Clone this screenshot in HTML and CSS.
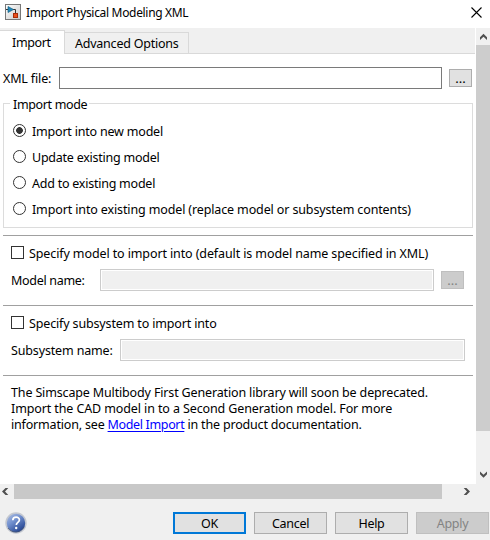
FILE: index.html
```html
<!DOCTYPE html>
<html lang="en">
<head>
<meta charset="utf-8">
<title>Import Physical Modeling XML</title>
<link rel="stylesheet" href="styles.css">
</head>
<body>
<div class="dialog">
  <header class="titlebar">
    <svg class="app-icon" width="16" height="16" viewBox="0 0 16 16">
      <defs><linearGradient id="tile" x2="1" y2="1"><stop offset="0" stop-color="#fff"/><stop offset="1" stop-color="#c9c9c9"/></linearGradient></defs>
      <rect x=".5" y=".5" width="15" height="15" fill="url(#tile)" stroke="#777"/>
      <path d="M1 5.500h2M8 5.500h2.500v4" fill="none" stroke="#333"/>
      <path d="M3 2.500v6l5.500-3z" fill="#2389bd" stroke="#176080" stroke-width=".7"/>
      <rect x="8.500" y="9.500" width="4" height="4" fill="#e8501e" stroke="#a92c08"/>
    </svg>
    <h1 class="title">Import Physical Modeling XML</h1>
    <svg class="close" width="11" height="11" viewBox="0 0 11 11"><path d="M.5.5l10 10M10.500.5l-10 10" stroke="#000" stroke-width="1.100"/></svg>
  </header>
  <div class="viewport">
    <main class="pane">
      <nav class="tabs">
        <div class="tab active"><span class="t-import">Import</span></div>
        <div class="tab"><span class="t-advanced">Advanced Options</span></div>
      </nav>
      <div class="row file-row">
        <label class="t-file">XML file:</label>
        <div class="field"></div>
        <button class="browse">...</button>
      </div>
      <fieldset class="mode">
        <legend><span class="t-mode">Import mode</span></legend>
        <label class="option"><i class="radio on"></i><span class="t-r1">Import into new model</span></label>
        <label class="option"><i class="radio"></i><span class="t-r2">Update existing model</span></label>
        <label class="option"><i class="radio"></i><span class="t-r3">Add to existing model</span></label>
        <label class="option"><i class="radio"></i><span class="t-r4">Import into existing model (replace model or subsystem contents)</span></label>
      </fieldset>
      <section class="group">
        <label class="check"><i class="box"></i><span class="t-c1">Specify model to import into (default is model name specified in XML)</span></label>
        <div class="row name-row model-row">
          <label class="label-model"><span class="t-model">Model name:</span></label>
          <div class="field off"></div>
          <button class="browse off" disabled>...</button>
        </div>
      </section>
      <section class="group">
        <label class="check"><i class="box"></i><span class="t-c2">Specify subsystem to import into</span></label>
        <div class="row name-row">
          <label class="label-sub"><span class="t-sub">Subsystem name:</span></label>
          <div class="field off"></div>
        </div>
      </section>
      <div class="note">
        <div class="t-n1">The Simscape Multibody First Generation library will soon be deprecated.</div>
        <div class="t-n2">Import the CAD model in to a Second Generation model. For more</div>
        <div class="t-n3">information, see <a class="link">Model Import</a> in the product documentation.</div>
      </div>
    </main>
    <div class="vbar">
      <svg width="14" height="17" viewBox="0 0 14 17"><path d="M4 12V9.200l3.500-3.500L11 9.200V12L7.500 8.700z" fill="#505050"/></svg>
      <div class="vthumb"></div>
      <svg class="end" width="14" height="17" viewBox="0 0 14 17"><path d="M4 4.500v2.800l3.500 3.500L11 7.300V4.500L7.500 7.800z" fill="#505050"/></svg>
    </div>
  </div>
  <div class="hbar">
    <svg width="14" height="15" viewBox="0 0 14 15"><path d="M8.300 4H5.500L2 7.500 5.500 11h2.800L5 7.500z" fill="#505050"/></svg>
    <div class="hthumb"></div>
    <svg class="right" width="14" height="15" viewBox="0 0 14 15"><path d="M1.700 4h2.800L8 7.500 4.500 11H1.700L5 7.500z" fill="#505050"/></svg>
  </div>
  <footer class="footer">
    <svg class="help-icon" width="22" height="22" viewBox="0 0 22 22">
      <defs><linearGradient id="orb" x2=".7" y2="1"><stop offset="0" stop-color="#b6c5e5"/><stop offset=".45" stop-color="#7391cf"/><stop offset="1" stop-color="#1d3d8b"/></linearGradient></defs>
      <circle cx="11" cy="11" r="10" fill="url(#orb)" stroke="#c4c8d0" stroke-width="1.500"/>
      <path d="M3 16a9.300 9.300 0 0 0 16-1" fill="none" stroke="#475574" stroke-width=".8"/>
      <path d="M7.800 8.200c.1-4.200 6.700-4.100 6.600-.2 0 2.500-3.100 2.400-3.100 5" fill="none" stroke="#fff" stroke-width="1.700"/>
      <circle cx="11.200" cy="16" r="1.200" fill="#fff"/>
    </svg>
    <button class="btn primary">OK</button>
    <button class="btn">Cancel</button>
    <button class="btn">Help</button>
    <button class="btn off" disabled>Apply</button>
  </footer>
</div>
</body>
</html>
```
FILE: styles.css
```css
* { box-sizing: border-box; }
body { margin: 0; font: 12.5px/16px "Noto Sans", sans-serif; color: #000; white-space: nowrap; }
.dialog { width: 490px; height: 540px; display: flex; flex-direction: column; background: #fff; overflow: hidden; }
.titlebar { height: 28px; display: flex; align-items: flex-start; padding: 4px 8px 0 5px; }
.title { flex: 1; margin: 1px 0 0 5px; font-size: 12px; font-weight: 400; line-height: 16px; letter-spacing: -.32px; }
.close { margin-top: 3px; }
.viewport { height: 456px; display: flex; }
.pane { width: 476px; }
.tabs { height: 26px; width: 475px; display: flex; align-items: flex-end; background: #f0f0f0; border-bottom: 1px solid #d9d9d9; }
.tab { height: 21px; width: 124px; padding: 3px 0 0 10px; border: 1px solid #d9d9d9; border-width: 1px 1px 0 0; line-height: 16px; }
.tab.active { width: 65px; height: 24px; padding: 4px 0 0 12px; background: #fff; margin-bottom: -1px; }
.row { display: flex; align-items: center; }
.row label, .option span, .check span { padding-top: 2px; }
.field { flex: 1; height: 22px; border: 1px solid #7a7a7a; background: #fff; }
.field.off { border-color: #ccc; background: #f0f0f0; box-shadow: inset 0 0 0 1px #fff; }
.browse { width: 23px; height: 18px; margin-left: 7px; padding: 0; border: 1px solid #adadad; background: #e1e1e1; font: 13px/16px "Noto Sans", sans-serif; }
.browse.off { background: #ccc; border-color: #bfbfbf; color: #838383; }
.file-row { margin: 13px 4px 0 3px; height: 22px; }
.file-row label { width: 56px; }
.mode { position: relative; margin: 14px 3px 0; height: 125px; padding: 14px 0 0 9px; border: 1px solid #dcdcdc; }
.mode legend { position: absolute; top: -7px; left: 6px; padding: 0 2px 0 3px; background: #fff; }
.option { height: 26px; display: flex; align-items: center; }
.radio { width: 13px; height: 13px; margin-right: 6px; border: 1px solid #333; border-radius: 50%; position: relative; top: -1px; }
.radio.on { background: radial-gradient(circle, #333 0 3px, #fff 3.700px); }
.group { height: 70px; margin: 0 3px; padding: 10px 8px 0; border-top: 1px solid #a0a0a0; }
.mode + .group { margin-top: 7px; }
.check { display: flex; height: 13px; align-items: center; }
.box { width: 13px; height: 13px; margin-right: 5px; border: 1px solid #333; }
.name-row { margin-top: 10px; }
.model-row { margin-right: 1px; }
.label-model { width: 89px; }
.label-sub { width: 109px; }
.note { margin: 0 3px; padding: 9px 8px 0; border-top: 1px solid #a0a0a0; }
.link { display: inline-block; height: 16px; line-height: 16px; color: #00f; text-decoration: underline 1px; text-underline-offset: 2px; letter-spacing: -.35px; vertical-align: top; }
.t-import, .t-mode { letter-spacing: -.35px; }
.t-advanced { letter-spacing: -.23px; }
.t-file, .t-c2, .t-sub, .t-n1 { letter-spacing: -.15px; }
.t-r4 { letter-spacing: -.13px; }
.t-r1 { letter-spacing: -.2px; }
.t-r2, .t-r3 { letter-spacing: -.24px; }
.t-c1, .t-n2 { letter-spacing: -.11px; }
.t-model { letter-spacing: -.3px; }
.t-n3 { letter-spacing: -.18px; }
.vbar { width: 14px; background: #f0f0f0; display: flex; flex-direction: column; }
.vbar svg { display: block; }
.vthumb { height: 386px; background: #cdcdcd; }
.vbar .end { margin-top: auto; }
.hbar { height: 15px; display: flex; background: #f0f0f0; }
.hthumb { width: 428px; background: #c8c8c8; }
.right { margin-left: 20px; }
.footer { height: 41px; display: flex; padding: 13px 1px 0 5px; gap: 8px; background: #f0f0f0; }
.help-icon { margin-right: auto; }
.btn { width: 73px; height: 22px; padding: 2px 0 0; border: 1px solid #adadad; background: #e1e1e1; font: 12.5px/16px "Noto Sans", sans-serif; letter-spacing: -.3px; color: #000; }
.btn.primary { border: 2px solid #0078d7; }
.btn.off { background: #ccc; border-color: #bfbfbf; color: #838383; }
```
